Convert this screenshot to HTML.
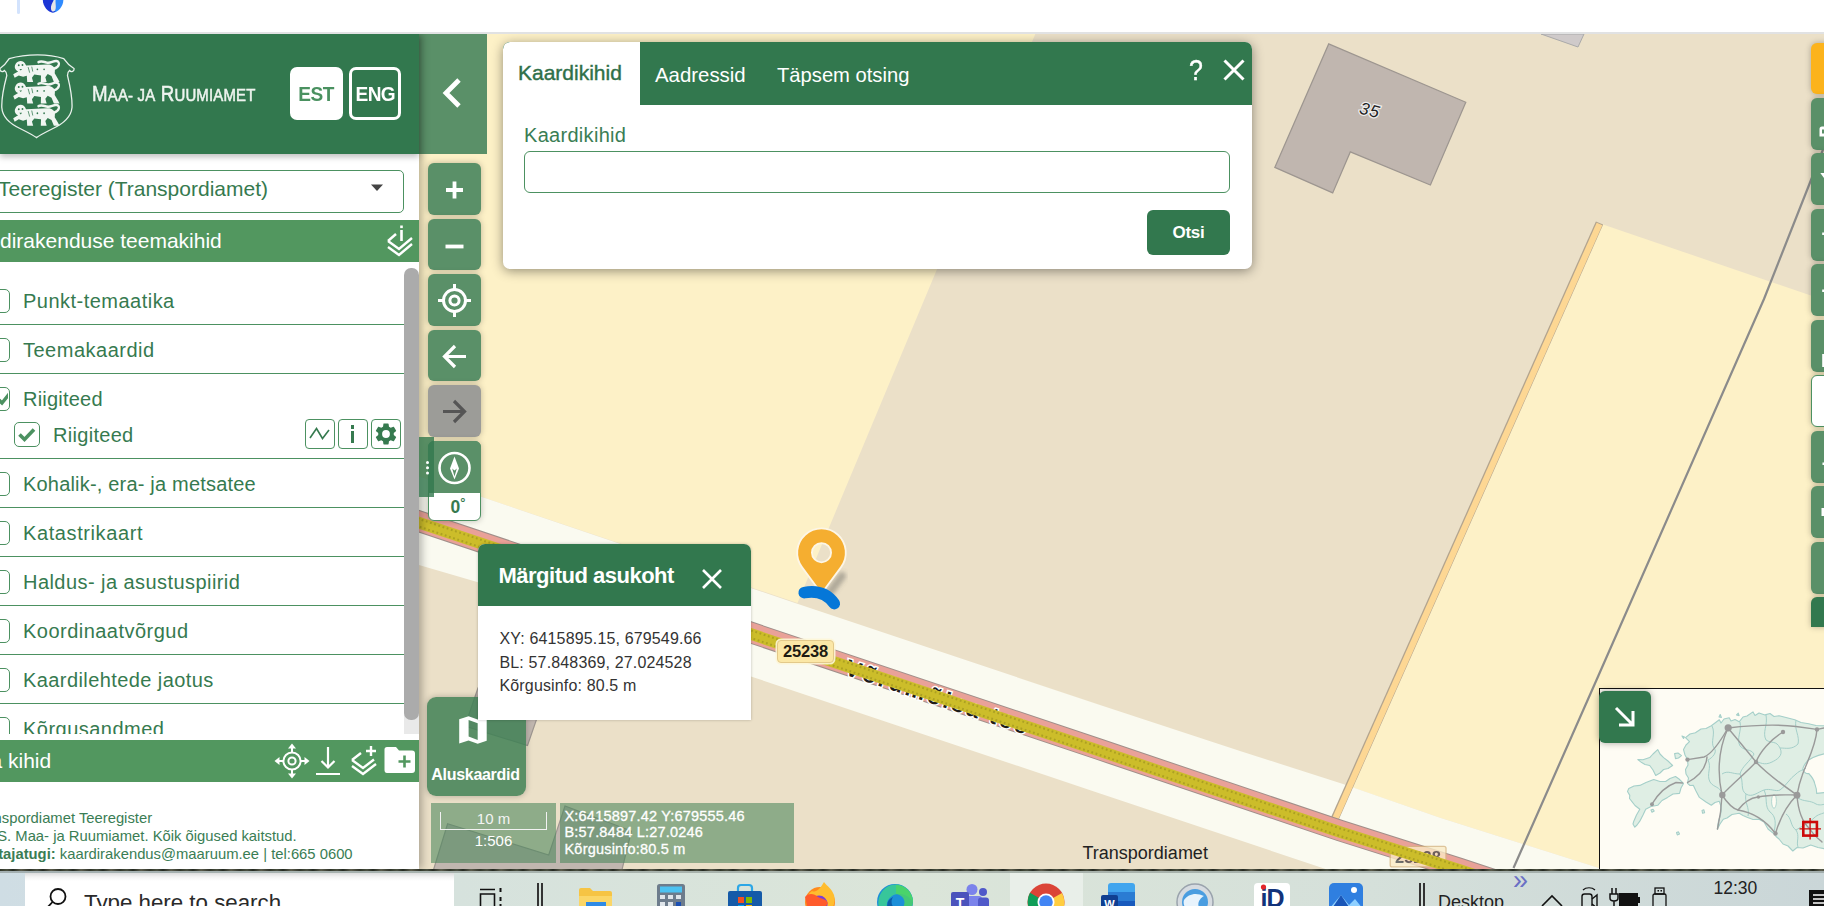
<!DOCTYPE html>
<html lang="et">
<head>
<meta charset="utf-8">
<title>Teeregister</title>
<style>
*{box-sizing:border-box}
html,body{margin:0;padding:0;width:1824px;height:906px;overflow:hidden;background:#fff;font-family:"Liberation Sans",sans-serif}
#root{position:relative;width:1824px;height:906px;overflow:hidden;background:#fff}
.abs{position:absolute}
#map{position:absolute;left:0;top:0;width:1824px;height:906px}
/* browser chrome top */
#chrome{position:absolute;left:0;top:0;width:1824px;height:34px;background:#fff;border-bottom:2px solid #e1e2e3;z-index:5}
/* sidebar */
#side{position:absolute;left:0;top:34px;width:419px;height:835px;background:#fff;box-shadow:3px 0 8px rgba(0,0,0,.28)}
#hdr{position:absolute;left:0;top:0;width:419px;height:120px;background:#32784e;box-shadow:0 3px 6px rgba(0,0,0,.25)}
#collapse{position:absolute;left:419px;top:34px;width:68px;height:120px;background:#5a9068}
.g{color:#367a4f}
.mbtn{position:absolute;left:428px;width:53px;height:52px;border-radius:6px;background:#5a9068;box-shadow:0 0 6px rgba(0,0,0,.25)}
.mbtn svg{position:absolute;left:0;top:0}
.rbtn{position:absolute;left:1811.3px;width:20px;height:52px;border-radius:6px;background:#5a9068;box-shadow:0 0 6px rgba(0,0,0,.28)}
.row{position:absolute;left:0;width:404px;border-bottom:1.3px solid #4c9161;height:49px}
.row .cb{position:absolute;left:-15px;top:13px;width:25px;height:24px;border:1.5px solid #4c9161;border-radius:5px;background:#fff}
.row .t{position:absolute;left:23px;top:13.5px;font-size:20px;color:#367a4f;white-space:nowrap;transform-origin:0 50%}
.bar{position:absolute;left:0;width:419px;height:42px;background:#52975f;color:#fff;font-size:21px}
</style>
</head>
<body>
<div id="root">

<!-- MAP -->
<svg id="map" viewBox="0 0 1824 906" width="1824" height="906">
  <defs>
  </defs>
  <rect x="0" y="0" width="1824" height="906" fill="#ebe0c8"/>
  <!-- left field -->
  <polygon points="419,34 1035.3,34 797.5,603 480.6,496.6 419,476.6" fill="#fdf1c7"/>
  <!-- right field -->
  <polygon points="1598.6,223 1824,300 1824,881 1640,881 1599,868 1440,817.8 1347,785.5" fill="#fdf1c7"/>
  <!-- road parcel (white) -->
  <polygon points="419,476.6 480.6,496.6 795,603 1100,705 1240,751 1343.8,784.2 1440,817.8 1599,868 1640,881 1361,881 1324,868.5 1100,793.5 751,676.5 478,582.2 419,565" fill="#fafaf0"/>
  <!-- orange track -->
  <line x1="1599.5" y1="223" x2="1334.9" y2="818.4" stroke="#b3a48e" stroke-width="8"/>
  <line x1="1599.5" y1="224" x2="1334.9" y2="819.4" stroke="#fdd793" stroke-width="6.2"/>
  <!-- grey line -->
  <polyline points="1824,147 1811,180 1764,299 1596.5,680 1513.5,868" fill="none" stroke="#8b8b8b" stroke-width="2.2" stroke-linejoin="round"/>
  <!-- buildings -->
  <polygon points="1328.7,43.9 1465.8,102.2 1430.4,185 1350.3,151.9 1332.7,192.9 1274.8,167.4" fill="#c0b6af" stroke="#9d9690" stroke-width="1.2"/>
  <polygon points="1541,34 1578,47 1584,34" fill="#cfcaca" stroke="#aaa" stroke-width="1"/>
  <polygon points="447.6,823.8 548.7,855 565,806 631.4,831 620,878 431,878" fill="#c0b6af" stroke="#9d9690" stroke-width="1.2"/>
  <polygon points="546,692 527.5,745.5 465,726 478,688" fill="#c0b6af" stroke="#9d9690" stroke-width="1.2"/>
  <text x="1370" y="116" font-family="Liberation Sans, sans-serif" font-style="italic" font-size="17" fill="#222" stroke="#eee" stroke-width="2.5" paint-order="stroke" text-anchor="middle" transform="rotate(14 1370 110)" letter-spacing="1">35</text>
  <!-- road -->
  <polyline points="380,507.9 419,521.2 751,632.6 1100,749.6 1340,830.6 1459.8,868.5 1520,888.5" fill="none" stroke="#a08f8a" stroke-width="21.6"/>
  <polyline points="380,507.9 419,521.2 751,632.6 1100,749.6 1340,830.6 1459.8,868.5 1520,888.5" fill="none" stroke="#e9a198" stroke-width="19.6"/>
  <text id="roadname" font-family="Liberation Sans, sans-serif" font-weight="bold" font-size="23" fill="#1c1c1c" stroke="#fff" stroke-width="3" paint-order="stroke" letter-spacing="2.700" transform="translate(843.800,674.200) rotate(18.400)">Võrumõisa tee</text>
  <g opacity=".78"><rect x="1390.2" y="846.3" width="55.8" height="20.6" rx="2" fill="#fbebc6" stroke="#d6b582" stroke-width="1.3"/><text x="1418" y="863" font-family="Liberation Sans, sans-serif" font-weight="bold" font-size="16.5" fill="#4a4a4a" text-anchor="middle">25238</text></g>
  <polyline points="380,509.4 419,522.7 751,634.1 1100,751.1 1340,832.1 1459.8,870.0 1520,890.0" fill="none" stroke="#ccbd2a" stroke-width="11.6"/>
  <polyline points="380,505.7 419,519.0 751,630.4 1100,747.4 1340,828.4 1459.8,866.3 1520,886.3" fill="none" stroke="#ada122" stroke-width="2.1" stroke-dasharray="1.8 2.6"/>
  <polyline points="380,513.3 419,526.6 751,638.0 1100,755.0 1340,836.0 1459.8,873.9 1520,893.9" fill="none" stroke="#ada122" stroke-width="2.1" stroke-dasharray="1.8 2.6" stroke-dashoffset="2"/>
</svg>

<!-- BROWSER CHROME -->
<div id="chrome">
  <div class="abs" style="left:17px;top:-3px;width:3px;height:16.700px;background:#d3e3fd;border-radius:1.500px"></div>
  <svg class="abs" style="left:40px;top:0" width="26" height="14" viewBox="0 0 26 14"><path d="M2.800 0 C3 6.500 8 12.600 13 12.600 L13 0 Z" fill="#1b36d6"/><path d="M23.400 0 C23.200 6.500 18 12.600 13 12.600 L13 0 Z" fill="#2f8bff"/><path d="M13 12.600 C11 12.600 10.500 11 10.500 11 L15.500 11 C15.500 11 15 12.600 13 12.600 Z" fill="#1b36d6"/><path d="M14 0 C12 3 10.600 6 11 9 C11.300 11 12.200 11.600 13.200 11.600 C14.600 11.600 15.800 10 15.800 7 C15.800 4 15.400 2 15.600 0 Z" fill="#e6e6e6"/></svg>
</div>


<!-- collapse button -->
<div id="collapse"><svg class="abs" style="left:21px;top:42.5px" width="24" height="32" viewBox="0 0 24 32"><path d="M19 3 L6 16 L19 29" fill="none" stroke="#fff" stroke-width="4.8"/></svg></div>

<!-- SIDEBAR -->
<div id="side">
  <div id="hdr">
    <svg class="abs" style="left:0;top:18px" width="80" height="90" viewBox="0 0 80 90">
      <path d="M9.2 6.6 C18 4 28 2.8 37.6 2.8 C47 2.8 56 4 63.7 6.6 C66 10 69 13.5 74 16.5 C74.5 19.5 71 20.5 69.5 18.5 C68 19.5 67.5 21.5 67.5 23.5 C70 34 72.5 44 72 55.5 C71 66 63 72 52 77 C46 80 40 83 36.4 85.6 C33 83 27 80 21 77 C10 72 2.5 66 1.8 55.5 C1.4 44 4 34 6.8 23.5 C6.8 21.5 6 19.5 4.5 18.5 C3 20.5 -0.5 19.5 0 16.5 C4.5 13.5 7 10 9.2 6.6 Z" fill="none" stroke="#e9f1ec" stroke-width="1.3"/>
      <g transform="translate(13.200,8.4) scale(1.030,1.120)"><path d="M12.5 4.5 L33 3.6 C37.5 3.4 40.5 5.5 40.5 9 L40.3 11.5 L43.5 16.5 L45 19.2 L39.5 19.2 L37.2 14 L33.5 12.2 L31.2 15 L32.5 19.2 L26.8 19.2 L27 13.4 L20.5 12.6 L18.2 15.4 L19.4 19.2 L13.6 19.2 L13.2 13.6 L9.6 14.6 L5.4 13.4 L1.4 15.6 L0 12.4 L4.8 9.8 C1.6 8.6 0.6 5.6 2.6 2.8 C4.8 -0.4 10.6 -0.6 12.5 4.5 Z" fill="#f1f6f2"/><path d="M39.5 7.5 C45 6 46 1.2 42 0.6 C38.5 0.2 36.5 3 32.5 2 C29.5 1.2 27 0.2 24.5 1.6" fill="none" stroke="#f1f6f2" stroke-width="2.2" stroke-linecap="round"/><g fill="#32784e"><circle cx="5.4" cy="4.4" r=".9"/><circle cx="9" cy="4.2" r=".9"/><path d="M6 7.6 L8.6 7.6 L7.3 9 Z"/><path d="M14.5 6 L16 11 M18 5.6 L19 10 M22.5 14 L24 18" stroke="#32784e" stroke-width=".7" fill="none"/><circle cx="23.5" cy="8" r=".8"/><circle cx="30" cy="8" r=".8"/></g></g>
      <g transform="translate(13.200,30.0) scale(1.030,1.120)"><path d="M12.5 4.5 L33 3.6 C37.5 3.4 40.5 5.5 40.5 9 L40.3 11.5 L43.5 16.5 L45 19.2 L39.5 19.2 L37.2 14 L33.5 12.2 L31.2 15 L32.5 19.2 L26.8 19.2 L27 13.4 L20.5 12.6 L18.2 15.4 L19.4 19.2 L13.6 19.2 L13.2 13.6 L9.6 14.6 L5.4 13.4 L1.4 15.6 L0 12.4 L4.8 9.8 C1.6 8.6 0.6 5.6 2.6 2.8 C4.8 -0.4 10.6 -0.6 12.5 4.5 Z" fill="#f1f6f2"/><path d="M39.5 7.5 C45 6 46 1.2 42 0.6 C38.5 0.2 36.5 3 32.5 2 C29.5 1.2 27 0.2 24.5 1.6" fill="none" stroke="#f1f6f2" stroke-width="2.2" stroke-linecap="round"/><g fill="#32784e"><circle cx="5.4" cy="4.4" r=".9"/><circle cx="9" cy="4.2" r=".9"/><path d="M6 7.6 L8.6 7.6 L7.3 9 Z"/><path d="M14.5 6 L16 11 M18 5.6 L19 10 M22.5 14 L24 18" stroke="#32784e" stroke-width=".7" fill="none"/><circle cx="23.5" cy="8" r=".8"/><circle cx="30" cy="8" r=".8"/></g></g>
      <g transform="translate(13.200,52.3) scale(1.030,1.120)"><path d="M12.5 4.5 L33 3.6 C37.5 3.4 40.5 5.5 40.5 9 L40.3 11.5 L43.5 16.5 L45 19.2 L39.5 19.2 L37.2 14 L33.5 12.2 L31.2 15 L32.5 19.2 L26.8 19.2 L27 13.4 L20.5 12.6 L18.2 15.4 L19.4 19.2 L13.6 19.2 L13.2 13.6 L9.6 14.6 L5.4 13.4 L1.4 15.6 L0 12.4 L4.8 9.8 C1.6 8.6 0.6 5.6 2.6 2.8 C4.8 -0.4 10.6 -0.6 12.5 4.5 Z" fill="#f1f6f2"/><path d="M39.5 7.5 C45 6 46 1.2 42 0.6 C38.5 0.2 36.5 3 32.5 2 C29.5 1.2 27 0.2 24.5 1.6" fill="none" stroke="#f1f6f2" stroke-width="2.2" stroke-linecap="round"/><g fill="#32784e"><circle cx="5.4" cy="4.4" r=".9"/><circle cx="9" cy="4.2" r=".9"/><path d="M6 7.6 L8.6 7.6 L7.3 9 Z"/><path d="M14.5 6 L16 11 M18 5.6 L19 10 M22.5 14 L24 18" stroke="#32784e" stroke-width=".7" fill="none"/><circle cx="23.5" cy="8" r=".8"/><circle cx="30" cy="8" r=".8"/></g></g>
    </svg>
    <div class="abs" id="brand" style="left:92px;top:47.5px;color:#eef4ef;white-space:nowrap;font-size:21.5px;line-height:24px;transform-origin:0 50%;transform:scaleX(.87);letter-spacing:.2px;-webkit-text-stroke:.55px #eef4ef">M<span style="font-size:17.2px">AA- JA</span> R<span style="font-size:17.2px">UUMIAMET</span></div>
    <div class="abs" style="left:290px;top:33px;width:53px;height:53px;border-radius:7px;background:#fff;color:#4a9160;font-weight:bold;font-size:20.5px;line-height:53px;text-align:center;letter-spacing:-.6px"><span id="est" style="display:inline-block;transform:scaleX(.93)">EST</span></div>
    <div class="abs" style="left:349px;top:33px;width:52px;height:53px;border-radius:7px;border:3px solid #fff;color:#fff;font-weight:bold;font-size:20.5px;line-height:47px;text-align:center;letter-spacing:-.6px"><span id="eng" style="display:inline-block;transform:scaleX(.93)">ENG</span></div>
  </div>

  <!-- select -->
  <div class="abs" style="left:-20px;top:136px;width:424px;height:43px;border:1.5px solid #4c9161;border-radius:5px;background:#fff"></div>
  <div class="abs g" id="seltxt" style="left:-2px;top:142.200px;font-size:21px;line-height:26px;white-space:nowrap;transform-origin:0 50%">Teeregister (Transpordiamet)</div>
  <svg class="abs" style="left:370px;top:150px" width="14" height="8" viewBox="0 0 14 8"><path d="M1 0.5 L13 0.5 L7 7 Z" fill="#444"/></svg>

  <!-- theme bar -->
  <div class="bar" style="top:186px"><span class="abs" id="bar1" style="left:0;top:8px;line-height:26px;white-space:nowrap;transform-origin:0 50%">dirakenduse teemakihid</span>
    <svg class="abs" style="left:385px;top:2px" width="30" height="36" viewBox="0 0 30 36"><path d="M3 19 L14 27 L27 16" fill="none" stroke="#fff" stroke-width="2.4"/><path d="M3 25 L14 33 L27 22" fill="none" stroke="#fff" stroke-width="2.4"/><path d="M3 19 L11 12" fill="none" stroke="#fff" stroke-width="2.4"/><rect x="15.2" y="8" width="2.6" height="11" fill="#fff"/><rect x="15.2" y="3.5" width="2.6" height="2.6" fill="#fff"/></svg>
  </div>

  <!-- list -->
  <div class="abs" style="left:0;top:228px;width:419px;height:471.5px;overflow:hidden">
    <div class="row" style="top:14px"><div class="cb"></div><div class="t" style="letter-spacing:0.48px">Punkt-temaatika</div></div>
    <div class="row" style="top:63px"><div class="cb"></div><div class="t" style="letter-spacing:0.5px">Teemakaardid</div></div>
    <div class="row" style="top:112px;height:85px"><div class="cb"><svg class="abs" style="left:0;top:0" width="22" height="21" viewBox="0 0 22 21"><path d="M13 12 L16 15 L24 5" fill="none" stroke="#4c9161" stroke-width="3.4"/></svg></div><div class="t" style="letter-spacing:.21px">Riigiteed</div>
      <div class="abs" style="left:14px;top:48px;width:26px;height:25px;border:1.5px solid #4c9161;border-radius:5px;background:#fff"><svg class="abs" style="left:0;top:0" width="23" height="22" viewBox="0 0 23 22"><path d="M4.5 11.5 L9.5 16.5 L19 6.5" fill="none" stroke="#4c9161" stroke-width="3.6"/></svg></div>
      <div class="t" style="left:53px;top:49.5px;letter-spacing:.3px">Riigiteed</div>
      <div class="abs" style="left:305px;top:45.400px;width:30px;height:30px;border:1.5px solid #4c9161;border-radius:4px"><svg class="abs" style="left:0;top:0" width="27" height="27" viewBox="0 0 27 27"><path d="M4 18 L10.5 8.5 L16.5 18.5 L23 10" fill="none" stroke="#367a4f" stroke-width="1.6"/></svg></div>
      <div class="abs" style="left:338px;top:45.400px;width:30px;height:30px;border:1.5px solid #4c9161;border-radius:4px"><div class="abs" style="left:11.5px;top:5px;width:3.6px;height:3.6px;background:#367a4f"></div><div class="abs" style="left:11.5px;top:10.5px;width:3.6px;height:12px;background:#367a4f"></div></div>
      <div class="abs" style="left:371px;top:45.400px;width:30px;height:30px;border:1.5px solid #4c9161;border-radius:4px"><svg class="abs" style="left:0.5px;top:0.5px" width="26" height="26" viewBox="0 0 24 24"><path fill="#367a4f" d="M19.14 12.94c.04-.3.06-.61.06-.94 0-.32-.02-.64-.07-.94l2.030-1.580a.49.49 0 0 0 .12-.61l-1.920-3.320a.49.49 0 0 0-.59-.22l-2.390.96c-.5-.38-1.030-.7-1.620-.94l-.36-2.540a.48.48 0 0 0-.48-.41h-3.840c-.24 0-.43.17-.47.41l-.36 2.540c-.59.24-1.130.57-1.620.94l-2.390-.96c-.22-.08-.47 0-.59.22L2.740 8.870c-.12.21-.08.47.12.61l2.030 1.580c-.05.3-.09.63-.09.94s.02.64.07.94l-2.030 1.580a.49.49 0 0 0-.12.61l1.920 3.320c.12.22.37.29.59.22l2.390-.96c.5.38 1.030.7 1.620.94l.36 2.540c.05.24.24.41.48.41h3.840c.24 0 .44-.17.47-.41l.36-2.540c.59-.24 1.130-.56 1.620-.94l2.390.96c.22.08.47 0 .59-.22l1.920-3.320c.12-.22.07-.47-.12-.61l-2.010-1.580zM12 15.600A3.600 3.600 0 1 1 12 8.400a3.600 3.600 0 0 1 0 7.200z"/></svg></div>
    </div>
    <div class="row" style="top:197px"><div class="cb"></div><div class="t" style="letter-spacing:0.19px">Kohalik-, era- ja metsatee</div></div>
    <div class="row" style="top:246px"><div class="cb"></div><div class="t" style="letter-spacing:0.6px">Katastrikaart</div></div>
    <div class="row" style="top:295px"><div class="cb"></div><div class="t" style="letter-spacing:0.44px">Haldus- ja asustuspiirid</div></div>
    <div class="row" style="top:344px"><div class="cb"></div><div class="t" style="letter-spacing:0.475px">Koordinaatvõrgud</div></div>
    <div class="row" style="top:393px"><div class="cb"></div><div class="t" style="letter-spacing:0.42px">Kaardilehtede jaotus</div></div>
    <div class="row" style="top:442px"><div class="cb"></div><div class="t" style="letter-spacing:0.475px">Kõrgusandmed</div></div>
    <!-- scrollbar -->
    <div class="abs" style="left:404px;top:440px;width:15px;height:38px;background:#e9e9e9"></div>
    <div class="abs" style="left:404px;top:6px;width:15px;height:452px;background:#ababab;border-radius:7px"></div>
  </div>

  <!-- layers bar -->
  <div class="bar" style="top:706px"><span class="abs" id="bar2" style="left:-9.5px;top:8px;line-height:26px;white-space:nowrap">a kihid</span>
    <svg class="abs" style="left:273px;top:2px" width="38" height="38" viewBox="0 0 38 38"><g fill="none" stroke="#fff" stroke-width="2"><circle cx="19" cy="19" r="8.6"/><circle cx="19" cy="19" r="3.6"/></g><g fill="#fff"><path d="M19 1.5 l4 5 h-8z M19 36.5 l4 -5 h-8z M1.5 19 l5 -4 v8z M36.5 19 l-5 -4 v8z"/><rect x="18" y="5" width="2" height="6"/><rect x="18" y="27" width="2" height="6"/><rect x="5" y="18" width="6" height="2"/><rect x="27" y="18" width="6" height="2"/></g></svg>
    <svg class="abs" style="left:314px;top:5px" width="28" height="32" viewBox="0 0 28 32"><g fill="none" stroke="#fff" stroke-width="2.2"><path d="M14 2 V22 M7.5 16 L14 22.5 L20.5 16 M2 29 H26"/></g></svg>
    <svg class="abs" style="left:349px;top:3px" width="32" height="36" viewBox="0 0 32 36"><g fill="none" stroke="#fff" stroke-width="2.4"><path d="M3 17 L14 25 L25 16.5 M3 23 L14 31 L27 21 M3 17 L12 10"/><path d="M22 3 V13 M17 8 H27"/></g></svg>
    <svg class="abs" style="left:384px;top:6px" width="32" height="28" viewBox="0 0 32 28"><path d="M3 1 H12 L15 4.5 H28 Q31 4.5 31 7.5 V24 Q31 27 28 27 H3 Q0.5 27 0.5 24 V3.5 Q0.5 1 3 1 Z" fill="#fff"/><path d="M20.5 9.5 V21.5 M14.5 15.5 H26.5" stroke="#52975f" stroke-width="2.6" fill="none"/></svg>
  </div>

  <!-- footer -->
  <div class="abs g" id="foot" style="left:0;top:776px;font-size:14.8px;line-height:17.9px;white-space:nowrap;color:#3a7d54">
    <div><span id="f1" style="position:relative;left:-6.4px">nspordiamet Teeregister</span></div>
    <div><span id="f2" style="position:relative;left:-17.8px">&#169; S. Maa- ja Ruumiamet. Kõik õigused kaitstud.</span></div>
    <div><span id="f3" style="position:relative;left:-10.9px"><b id="f3b">utajatugi:</b> kaardirakendus@maaruum.ee | tel:665 0600</span></div>
  </div>
</div>

<!-- LEFT MAP TOOLBAR -->
<div class="mbtn" style="top:163px"><svg width="53" height="52" viewBox="0 0 53 52"><path d="M26.500 18.500 V35.500 M18 27 H35" stroke="#fff" stroke-width="3.800" fill="none"/></svg></div>
<div class="mbtn" style="top:219px;height:51px"><svg width="53" height="52" viewBox="0 0 53 52"><path d="M17.500 27.500 H35.500" stroke="#fff" stroke-width="3.8" fill="none"/></svg></div>
<div class="mbtn" style="top:274px"><svg width="53" height="52" viewBox="0 0 53 52"><g fill="none" stroke="#fff"><circle cx="26.500" cy="26.500" r="11" stroke-width="3"/><circle cx="26.500" cy="26.500" r="4.600" stroke-width="3"/><path d="M26.500 10 V16 M26.500 37 V43 M10 26.500 H16 M37 26.500 H43" stroke-width="3"/></g></svg></div>
<div class="mbtn" style="top:330px;height:51px"><svg width="53" height="52" viewBox="0 0 53 52"><path d="M38 26.500 H17 M27 16 L16.500 26.500 L27 37" stroke="#fff" stroke-width="3.200" fill="none"/></svg></div>
<div class="mbtn" style="top:385px;background:#9c9c98"><svg width="53" height="52" viewBox="0 0 53 52"><path d="M15 26.500 H36 M26 16 L36.500 26.500 L26 37" stroke="#555" stroke-width="3.200" fill="none"/></svg></div>
<!-- compass + handle -->
<div class="abs" style="left:428px;top:441px;width:53px;height:80px;border-radius:6px;background:#fff;border:1.300px solid #4c9161;box-shadow:0 0 6px rgba(0,0,0,.25)"></div>
<div class="mbtn" style="top:441px;border-radius:6px 6px 0 0;box-shadow:none"><svg width="53" height="52" viewBox="0 0 53 52"><circle cx="26.500" cy="27" r="15" fill="none" stroke="#fff" stroke-width="2.600"/><path d="M26.500 15.500 L31 27.500 L26.500 38.500 L22 27.500 Z" fill="#fff"/><path d="M26.500 29.500 L28.800 27.500 L26.500 35.500 L24.200 27.500 Z" fill="#5a9068"/></svg></div>
<div class="abs g" style="left:428px;top:496px;width:53px;text-align:center;font-weight:bold;font-size:17.500px;line-height:22px;padding-left:7px">0<span style="font-size:13px;position:relative;top:-6px">°</span></div>
<div class="abs" style="left:419px;top:437px;width:15px;height:60px;background:rgba(50,120,78,.8)"></div>
<div class="abs" style="left:426px;top:461px;width:3.2px;height:3.2px;background:#fff;border-radius:2px;box-shadow:0 5.2px 0 #fff,0 10.400px 0 #fff"></div>

<!-- Aluskaardid -->
<div class="abs" style="left:427px;top:697px;width:99px;height:99px;border-radius:9px;background:rgba(62,128,84,.84);box-shadow:0 0 6px rgba(0,0,0,.25)">
  <svg class="abs" style="left:30px;top:17px" width="32" height="32" viewBox="0 0 32 32"><path fill-rule="evenodd" d="M2.200 5.200 L11.500 2.200 L20.700 5.400 L29.700 2.400 V26.700 L20.700 29.700 L11.500 26.500 L2.200 29.500 Z M11.600 5.900 L20.700 9.200 V26 L11.600 22.400 Z" fill="#fff"/></svg>
  <div class="abs" id="alus" style="left:-1px;top:67.500px;width:99px;text-align:center;color:#fff;font-weight:bold;font-size:16px;line-height:20px;letter-spacing:-.3px">Aluskaardid</div>
</div>

<!-- scale + coords -->
<div class="abs" style="left:431px;top:803px;width:125px;height:59.6px;background:rgba(74,134,92,.58)">
  <div class="abs" style="left:9px;top:9px;width:107px;height:18px;border:1.300px solid #f2f2f2;border-top:none"></div>
  <div class="abs" style="left:0;top:6px;width:125px;text-align:center;color:#f4f4f4;font-size:15px;line-height:20px">10 m</div>
  <div class="abs" style="left:0;top:28px;width:125px;text-align:center;color:#fff;font-size:15px;line-height:20px">1:506</div>
</div>
<div class="abs" id="coords" style="left:560px;top:803px;width:234px;height:59.6px;background:rgba(74,134,92,.58);color:#fff;font-size:14.500px;line-height:16.700px;padding:4.500px 0 0 4.500px;letter-spacing:.2px;white-space:nowrap;-webkit-text-stroke:.3px #fff">
  <div>X:6415897.42 Y:679555.46</div><div>B:57.8484 L:27.0246</div><div>Kõrgusinfo:80.5 m</div>
</div>

<div class="abs" id="attr" style="left:1082.500px;top:841.500px;font-size:18px;line-height:22px;color:#222;white-space:nowrap">Transpordiamet</div>

<!-- RIGHT TOOLBAR -->
<div class="rbtn" style="top:42.5px;height:51px;background:#fcb31c"></div>
<div class="rbtn" style="top:97.8px"></div>
<div class="rbtn" style="top:153.3px"></div>
<div class="rbtn" style="top:208.8px"></div>
<div class="rbtn" style="top:264.3px"></div>
<div class="rbtn" style="top:319.8px"></div>
<div class="rbtn" style="top:375.3px;background:#fff;border:1.3px solid #4c9161"></div>
<div class="rbtn" style="top:430.8px"></div>
<div class="rbtn" style="top:486.3px"></div>
<div class="rbtn" style="top:541.8px"></div>
<div class="rbtn" style="top:597.3px;height:30px;background:#32784e;border-radius:6px 0 0 0"></div>
<svg class="abs" style="left:1811px;top:98px" width="13" height="500" viewBox="0 0 13 500"><g fill="#fff"><path d="M13 28.500 H11 Q8.500 28.500 8.500 31 V38.500 H13 V35.500 H11 V31.500 H13 Z"/><path d="M9.300 75 H13 V80 Z"/><rect x="11.200" y="134.500" width="1.800" height="2.500"/><rect x="11.200" y="191.500" width="1.800" height="2.500"/><rect x="11.200" y="256" width="1.800" height="13"/><rect x="11.500" y="364.500" width="1.500" height="2.500"/><rect x="10.500" y="410" width="2.500" height="8"/></g></svg>

<!-- SEARCH PANEL -->
<div class="abs" style="left:503px;top:42px;width:749px;height:227px;background:#fff;border-radius:7px;box-shadow:0 2px 12px rgba(0,0,0,.42);overflow:hidden">
  <div class="abs" style="left:0;top:0;width:749px;height:63px;background:#32784e"></div>
  <div class="abs" style="left:0;top:0;width:137px;height:63px;background:#fff;border-radius:7px 0 0 0"></div>
  <div class="abs" id="tab1" style="left:15px;top:18px;font-size:21px;line-height:26px;color:#2f7049;white-space:nowrap;-webkit-text-stroke:.4px #2f7049">Kaardikihid</div>
  <div class="abs" id="tab2" style="left:152px;top:20px;font-size:20.400px;line-height:26px;color:#fff;white-space:nowrap">Aadressid</div>
  <div class="abs" id="tab3" style="left:274px;top:20px;font-size:20.200px;line-height:26px;color:#fff;white-space:nowrap">Täpsem otsing</div>
  <div class="abs" id="qm" style="left:686px;top:12px;font-size:29px;line-height:32px;color:#fff;transform:scaleX(.86);transform-origin:0 50%;-webkit-text-stroke:.4px #fff">?</div>
  <svg class="abs" style="left:720px;top:17px" width="22" height="22" viewBox="0 0 22 22"><path d="M1.500 1.500 L20.500 20.500 M20.500 1.500 L1.500 20.500" stroke="#fff" stroke-width="3" fill="none"/></svg>
  <div class="abs g" id="lbl" style="left:21px;top:80.500px;font-size:20px;line-height:24px;white-space:nowrap;color:#3a7d54;letter-spacing:.3px">Kaardikihid</div>
  <div class="abs" style="left:21px;top:109px;width:706px;height:42px;border:1.300px solid #4c9161;border-radius:6px;background:#fff"></div>
  <div class="abs" style="left:644px;top:168px;width:83px;height:45px;border-radius:6px;background:#32784e;color:#fff;font-weight:bold;font-size:17px;line-height:45px;text-align:center;letter-spacing:-.3px">Otsi</div>
</div>

<!-- road shield labels -->
<div class="abs" style="left:777px;top:640px;width:57px;height:23px;background:#fbe7a6;border:1.300px solid #e3c98a;border-radius:4px;box-shadow:0 0 0 1.500px rgba(253,246,215,.9);color:#1d1a12;font-weight:bold;font-size:16.500px;line-height:21px;text-align:center;letter-spacing:-.2px">25238</div>

<!-- MARKER -->
<svg class="abs" style="left:786px;top:520px" width="80" height="96" viewBox="0 0 80 96">
  <defs><filter id="blur1" x="-50%" y="-50%" width="200%" height="200%"><feGaussianBlur stdDeviation="2.200"/></filter></defs>
  <path d="M44 72 L56 56" fill="none" stroke="rgba(95,95,90,.42)" stroke-width="8" stroke-linecap="round" filter="url(#blur1)"/>
  <path fill-rule="evenodd" d="M16.100 47.350 A24.300 24.300 0 1 1 54.900 47.350 L35.500 73.500 Z M35.500 23.100 A9.600 9.600 0 1 0 35.500 42.300 A9.600 9.600 0 1 0 35.500 23.100 Z" fill="#f5ae30" stroke="#fdf6e6" stroke-width="1.800" stroke-linejoin="round"/>
  <path d="M18.200 72.600 Q38 69 48.300 83.600" fill="none" stroke="#0577d8" stroke-width="11.600" stroke-linecap="round"/>
</svg>

<!-- POPUP -->
<div class="abs" style="left:477.500px;top:544px;width:273px;height:175.500px;background:#fff;border-radius:7px 7px 0 0;box-shadow:0 0 3px rgba(0,0,0,.25);overflow:hidden">
  <div class="abs" style="left:0;top:0;width:273px;height:62px;background:#32784e"></div>
  <div class="abs" id="ptitle" style="left:21px;top:18px;font-size:22px;line-height:28px;font-weight:bold;color:#fff;white-space:nowrap;letter-spacing:-.5px">Märgitud asukoht</div>
  <svg class="abs" style="left:223px;top:24px" width="22" height="22" viewBox="0 0 22 22"><path d="M2 2 L20 20 M20 2 L2 20" stroke="#fff" stroke-width="2.600" fill="none"/></svg>
  <div class="abs" id="pbody" style="left:22px;top:83px;font-size:16px;line-height:23.500px;color:#333;white-space:nowrap;letter-spacing:.15px">
    <div>XY: 6415895.15, 679549.66</div><div>BL: 57.848369, 27.024528</div><div>Kõrgusinfo: 80.5 m</div>
  </div>
</div>

<!-- OVERVIEW MAP -->
<div class="abs" style="left:1599px;top:688px;width:230px;height:182px;background:#fefcf4;border:1.500px solid #111">
  <svg class="abs" style="left:0;top:1px" width="226" height="180" viewBox="0 0 226 180">
    <g fill="#dfeee4" stroke="#a5cfc9" stroke-width="1.100" stroke-linejoin="round">
      <path d="M85.500 47.700 L90 44 L95.400 42.700 L101 39 L106 38.500 L111.300 35.800 L115 33 L119.300 29.800 L121 33 L124 29 L129.200 27.800 L131 31 L135 29.500 L139.200 31.800 L143 27 L147 26 L153 21.900 L155 25.500 L159 23 L165 24.900 L170 23.500 L174 26.500 L179 25.800 L186 27.500 L194.800 29.800 L201 32.500 L208.700 33.800 L216 35.500 L226 35.800 L226 63.600 C216 65 208 70 206.800 71.600 C204 75 202.800 77 202.800 79.500 C204 83 207 84 208.700 83.500 C212 87 214 90 214.700 93.400 C216 97 216.700 100 216.700 103.400 L226 102.400 L226 159 L218 157.500 L210.700 155 L203 158 L197 157.500 L192.800 161 L188 156 L183 154 L179 149 L176 146.500 L173 143 L168 139 L164 132 L159 129.200 L153 129.500 L147 127.200 L143 125.500 L139.200 123.300 L132 124.500 L127 128 L123.300 129.200 L120 134 L117.300 139.200 L118.500 131 L120.500 125 L121.300 119.300 L120.500 115 L119.300 111.300 L115 112.500 L111.300 115.300 L106 112 L99.400 107.400 L96 101 L93.400 95.400 L90 95.500 L87.500 93.400 L88.500 88 L86 84 L85.500 79.500 L88 75 L87.500 69.600 L85 65 L83.500 59.600 L86 55 L89.500 51.700 Z"/>
      <path d="M37.800 69.600 L43 69.800 L49.700 67.600 L53 64 L57.700 59.600 L60 64 L63.600 67.600 L68 71 L72.600 75.500 L68 78.500 L63.600 79.500 L60 83 L55.700 85.500 L53 80 L49.700 75.500 L45 74.500 L41.700 72.600 Z"/>
      <path d="M74.600 63.600 L78 63 L81.500 65.600 L78.500 68 L75.500 68.600 Z"/>
      <path d="M28.800 98.400 L34 96 L39.800 95.400 L46 92.500 L53.700 89.500 L60 91.500 L65.600 91.500 L70 88.500 L75.500 86.500 L79 89 L83.500 93.400 L81 98 L79.500 103.400 L73 104 L67.600 107.400 L62 110.500 L57.700 115.300 L51 116.500 L45.700 119.300 L43 125 L39.800 131.200 L37 135 L34.800 137.200 L33 134 L33.800 131.200 L36.500 125 L39.800 119.300 L35 115.500 L31.800 111.300 L29.500 108.500 L29.800 105.400 L27.500 101.500 Z"/>
      <path d="M51 120 l2 -0.800 l1.200 1.800 l-2.200 1.200 z M102 120.500 l1.800 -0.800 l0.800 3 l-2 0.600 z M76.500 142.500 l2 -0.600 l1 2.200 l-2.200 0.800 z M82 46 l2.500 1 l-1 1.500 z M119 27 l1.200 -2.500 l1.200 3 z M136.500 25 l1.800 -1.800 l0.800 2.400 z"/>
    </g>
    <ellipse cx="174" cy="111.300" rx="2.400" ry="7" fill="#fefcf3" stroke="#a5cfc9" stroke-width=".8"/>
    <g fill="none" stroke="#a5cfc9" stroke-width="1">
      <path d="M112 36 C116 44 110 52 114 58 C118 62 112 68 108 70 M108 70 C112 78 106 84 110 92 C114 98 120 96 122 104"/>
      <path d="M140 32 C142 42 136 48 140 56 C146 62 150 58 154 64 M154 64 C150 72 142 76 140 84 C132 84 128 80 122 84"/>
      <path d="M166 25 C168 36 162 42 166 50 C172 54 176 50 180 58 C184 66 176 70 172 72 C164 76 160 72 156 72"/>
      <path d="M196 30 C194 40 200 46 198 54 C192 60 186 58 180 58"/>
      <path d="M140 84 C144 92 140 100 146 104 C152 108 158 102 164 100 C170 98 176 102 180 100 C186 96 190 88 196 84 C200 80 204 80 206 78"/>
      <path d="M146 104 C144 112 150 118 148 126 M164 100 C168 108 164 116 170 122 C176 126 176 134 174 142"/>
      <path d="M186 124 C192 128 190 136 196 140 C200 146 196 152 198 157 M196 140 C202 136 208 134 214 128 C218 124 222 124 226 122"/>
      <path d="M198 108 C204 112 210 110 216 114 C220 116 224 114 226 114"/>
    </g>
    <g fill="none" stroke="#9a9a9a" stroke-width="1.400" stroke-linecap="round">
      <path d="M128 38 C150 35.500 176 34 196 36.500 L217 39.400 L226 37.500"/>
      <path d="M128 38 C138 50 148 62 156 72 C168 85 184 96 197 105"/>
      <path d="M183 42 C170 50 160 62 156 72 C146 83 134 92 122 105"/>
      <path d="M128 38 C120 56 116.500 80 122 105"/>
      <path d="M122 105 C121.500 118 120 128 117.500 139"/>
      <path d="M128 38 C120 52 112 64 104 67 L87.500 69.600"/>
      <path d="M107 67 C106 78 100 86 87.500 92.500"/>
      <path d="M52 114 C58 104 66 96 76 92.500 L82.500 93"/>
      <path d="M217 39.400 C216 56 206 74 202 86 C199 94 198 100 197 105"/>
      <path d="M122 105 C128 114 134 119 138 120 C144 112 150 108 158 107 C172 104 186 105 197 105"/>
      <path d="M138 120 C150 122 164 128 175.500 143.500"/>
      <path d="M197 105 C186 116 180 128 175.500 143.500"/>
      <path d="M197 105 C198 120 202 132 210 139 C214 146 220 150 222 152"/>
    </g>
    <g fill="#9a9a9a"><circle cx="128.200" cy="37.800" r="3.600"/><circle cx="197" cy="105.200" r="3.400"/><circle cx="122.300" cy="105" r="3.200"/><circle cx="156" cy="72" r="2.200"/><circle cx="183" cy="42" r="2.200"/><circle cx="217" cy="39.400" r="2.200"/><circle cx="87.500" cy="69.600" r="2.200"/><circle cx="52" cy="114.300" r="2"/><circle cx="175.500" cy="143.500" r="2.200"/><circle cx="158.400" cy="107" r="1.800"/></g>
    <g fill="none" stroke="#cc0a0a"><rect x="203.300" y="132" width="13.600" height="13.600" stroke-width="2.600"/><path d="M210.100 128 V149.500 M199.500 138.800 H221" stroke-width="1.300"/></g>
  </svg>
  <div class="abs" style="left:-1px;top:2px;width:52px;height:52px;border-radius:6px;background:#32784e;box-shadow:0 0 7px rgba(0,0,0,.35)"><svg width="52" height="52" viewBox="0 0 52 52"><path d="M17 17 L33 33 M20 34 H34 V20" fill="none" stroke="#fff" stroke-width="3"/></svg></div>
</div>

<!-- TASKBAR -->
<div class="abs" style="left:0;top:868.500px;width:1824px;height:38px;background:linear-gradient(90deg,#cfdde4 0,#d6e2dd 25%,#dbe5d9 50%,#d5e0da 75%,#cad6d8 100%);overflow:hidden">
  <div class="abs" style="left:0;top:0;width:1824px;height:2.400px;background:repeating-linear-gradient(90deg,#2f3528 0,#4a4f40 7px,#232820 13px,#5b5c4c 21px,#30342a 30px)"></div>
  <div class="abs" style="left:0;top:2.400px;width:1824px;height:1.800px;background:rgba(120,130,125,.5)"></div>
  <!-- search box -->
  <div class="abs" style="left:25px;top:4.200px;width:429px;height:40px;background:linear-gradient(#dcdcdc 0,#f4f4f4 4px,#fff 8px)"></div>
  <svg class="abs" style="left:42.800px;top:17.700px" width="26" height="26" viewBox="0 0 26 26"><circle cx="15" cy="10.500" r="7.500" fill="none" stroke="#111" stroke-width="1.800"/><path d="M9.500 16 L2 24" stroke="#111" stroke-width="1.800"/></svg>
  <div class="abs" id="tsearch" style="left:84px;top:21.200px;font-size:22.300px;line-height:26px;color:#2a2a2a;white-space:nowrap">Type here to search</div>
  <!-- task view -->
  <svg class="abs" style="left:478px;top:18px" width="30" height="22" viewBox="0 0 30 22"><g fill="none" stroke="#111" stroke-width="1.600"><path d="M2 2.500 H17 M2.500 7 H16.500 V22 H2.500 Z"/><path d="M22.500 1 V5 M22.500 10 V14 M22.500 17 V22" stroke-width="2"/></g></svg>
  <div class="abs" style="left:537px;top:14px;width:1.500px;height:30px;background:#333"></div>
  <div class="abs" style="left:541px;top:14px;width:1.500px;height:30px;background:#333"></div>
  <!-- file explorer -->
  <svg class="abs" style="left:578px;top:18.500px" width="36" height="22" viewBox="0 0 36 22"><path d="M1 3 Q1 1 3 1 H12 L15 4 H32 Q34 4 34 6 V22 H1 Z" fill="#f6c444"/><path d="M1 9 H34 V22 H1 Z" fill="#fbd667"/><rect x="8" y="15" width="20" height="7" fill="#2f8be6"/></svg>
  <!-- calculator -->
  <svg class="abs" style="left:656px;top:14px" width="30" height="26" viewBox="0 0 30 26"><rect x="1" y="1" width="28" height="26" rx="2.500" fill="#6d7c8c"/><rect x="4" y="3.500" width="22" height="6" fill="#4cc2f1"/><g fill="#dfe5ea"><rect x="4" y="12" width="5" height="4"/><rect x="12" y="12" width="5" height="4"/><rect x="20" y="12" width="5" height="4"/><rect x="4" y="19" width="5" height="4"/><rect x="12" y="19" width="5" height="4"/></g><rect x="20" y="19" width="5" height="7" fill="#1b4fb3"/></svg>
  <!-- store -->
  <svg class="abs" style="left:727px;top:14px" width="36" height="30" viewBox="0 0 36 30"><path d="M11 9 V5 Q11 2 14 2 H22 Q25 2 25 5 V9" fill="none" stroke="#2da7e6" stroke-width="2.200"/><rect x="1" y="8" width="34" height="24" rx="2" fill="#155aa8"/><rect x="11" y="14" width="6" height="6" fill="#f25022"/><rect x="19" y="14" width="6" height="6" fill="#7fba00"/><rect x="11" y="22" width="6" height="6" fill="#00a4ef"/><rect x="19" y="22" width="6" height="6" fill="#ffb900"/></svg>
  <!-- firefox -->
  <svg class="abs" style="left:802px;top:12px" width="36" height="28" viewBox="0 0 36 28"><circle cx="18" cy="21" r="15" fill="#ff8a1d"/><path d="M22 1 C25 5 30 8 32 14 C34 22 30 28 30 28 H8 C4 22 4 14 10 10 C14 12 18 8 22 1 Z" fill="#ffbd2e"/><circle cx="17" cy="23" r="8.500" fill="#7c3fd6"/><path d="M3 16 C6 12 12 12 16 16 C20 18 24 18 26 22 L22 28 H6 Z" fill="#ff5b2b"/></svg>
  <!-- edge -->
  <svg class="abs" style="left:876px;top:13px" width="38" height="27" viewBox="0 0 38 27"><circle cx="19" cy="20" r="18" fill="#1c8fd8"/><path d="M3 16 C6 5 16 1 24 3 C32 5 37 12 37 20 C32 12 22 10 16 14 C10 18 10 24 12 27 H4 C2 24 2 20 3 16 Z" fill="#38c69a"/><path d="M20 3 C30 3 37 12 37 20 C37 24 34 27 34 27 H26 C30 22 30 14 20 12 Z" fill="#4fd65f" opacity=".8"/><path d="M12 27 C10 22 12 17 17 15 C14 20 16 25 20 27 Z" fill="#0c5ea8"/></svg>
  <!-- teams -->
  <svg class="abs" style="left:950px;top:14px" width="40" height="26" viewBox="0 0 40 26"><circle cx="22" cy="6.500" r="5.500" fill="#7b83eb"/><circle cx="33" cy="9" r="4" fill="#5059c9"/><rect x="14" y="13" width="18" height="15" rx="3" fill="#7b83eb"/><rect x="28" y="14.500" width="11" height="13" rx="3" fill="#5059c9"/><rect x="1" y="9" width="18" height="19" rx="2" fill="#4b53bc"/><text x="10" y="25" font-family="Liberation Sans, sans-serif" font-weight="bold" font-size="14" fill="#fff" text-anchor="middle">T</text></svg>
  <!-- chrome (active) -->
  <div class="abs" style="left:1010px;top:4px;width:73px;height:40px;background:rgba(255,255,255,.42)"></div>
  <svg class="abs" style="left:1027px;top:13px" width="38" height="27" viewBox="0 0 38 27"><circle cx="19" cy="20" r="18.500" fill="#db4437"/><path d="M19 20 L3.500 29 A18.500 18.500 0 0 1 3 10.800 Z" fill="#0f9d58"/><path d="M3 10.800 L12 26 L3.500 29 Z" fill="#0f9d58"/><path d="M19 20 L35 11 A18.500 18.500 0 0 1 30 35 Z" fill="#ffcd40"/><circle cx="19" cy="20" r="8.500" fill="#fff"/><circle cx="19" cy="20" r="6.800" fill="#4285f4"/></svg>
  <!-- word -->
  <svg class="abs" style="left:1100px;top:13px" width="36" height="27" viewBox="0 0 36 27"><rect x="8" y="1" width="27" height="30" rx="3" fill="#41a5ee"/><rect x="8" y="10" width="27" height="9" fill="#2b7cd3"/><rect x="8" y="19" width="27" height="10" fill="#185abd"/><rect x="1" y="13" width="17" height="16" rx="2" fill="#103f91"/><text x="9.500" y="26" font-family="Liberation Sans, sans-serif" font-weight="bold" font-size="11" fill="#fff" text-anchor="middle">W</text></svg>
  <!-- globe app -->
  <svg class="abs" style="left:1176px;top:13px" width="38" height="27" viewBox="0 0 38 27"><circle cx="19" cy="20" r="18" fill="#d6dbe0" stroke="#9aa3ad" stroke-width="1.500"/><circle cx="19" cy="20" r="13" fill="#4a9de0"/><path d="M8 18 C12 12 20 10 28 14 C24 16 20 22 24 27 H10 C8 24 7 21 8 18 Z" fill="#e8f3fc"/></svg>
  <!-- iD -->
  <svg class="abs" style="left:1254px;top:14px" width="36" height="26" viewBox="0 0 36 26"><rect x="0" y="0" width="36" height="30" rx="4" fill="#fff"/><text x="18" y="24" font-family="Liberation Sans, sans-serif" font-weight="bold" font-size="25" fill="#12337a" text-anchor="middle" letter-spacing="-1">iD</text><circle cx="9.500" cy="4" r="2.600" fill="#e3262b"/></svg>
  <!-- photos -->
  <svg class="abs" style="left:1329px;top:14px" width="34" height="26" viewBox="0 0 34 26"><rect x="0" y="0" width="34" height="30" rx="5" fill="#2f7fe0"/><path d="M0 26 L12 12 L20 22 L26 16 L34 26 V30 H0 Z" fill="#8fd0ff"/><path d="M0 30 L12 12 L24 30 Z" fill="#1956b8"/><circle cx="25" cy="7" r="3" fill="#fff"/></svg>
  <div class="abs" style="left:1419px;top:14px;width:1.500px;height:30px;background:#333"></div>
  <div class="abs" style="left:1423px;top:14px;width:1.500px;height:30px;background:#333"></div>
  <div class="abs" id="desk" style="left:1438px;top:20px;font-size:18px;line-height:26px;color:#222;white-space:nowrap">Desktop</div>
  <div class="abs" style="left:1513px;top:-3px;font-size:27px;line-height:28px;color:#6a6fc4;letter-spacing:-2px">»</div>
  <svg class="abs" style="left:1540px;top:24px" width="24" height="14" viewBox="0 0 24 14"><path d="M2 13 L12 3 L22 13" fill="none" stroke="#111" stroke-width="1.600"/></svg>
  <svg class="abs" style="left:1578px;top:17px" width="24" height="22" viewBox="0 0 24 22"><path d="M5 4 C8 1 14 1 17 4" fill="none" stroke="#111" stroke-width="1.200"/><rect x="4" y="8" width="10" height="14" rx="2.500" fill="none" stroke="#111" stroke-width="1.400"/><path d="M14 13 L19 9 V22 L14 18" fill="none" stroke="#111" stroke-width="1.400"/></svg>
  <svg class="abs" style="left:1608px;top:19px" width="32" height="20" viewBox="0 0 32 20"><path d="M4 0 V6 M8 0 V6 M2 6 H10 V10 Q10 13 6 13 Q2 13 2 10 Z M6 13 V20" fill="none" stroke="#111" stroke-width="1.500"/><rect x="11" y="5" width="19" height="15" fill="#111"/><rect x="30" y="9" width="2" height="6" fill="#111"/></svg>
  <svg class="abs" style="left:1650px;top:18px" width="18" height="22" viewBox="0 0 18 22"><rect x="5" y="1" width="9" height="6" fill="none" stroke="#111" stroke-width="1.300"/><rect x="7.500" y="3" width="1.500" height="1.500" fill="#111"/><rect x="10.500" y="3" width="1.500" height="1.500" fill="#111"/><rect x="3" y="7" width="13" height="16" rx="1.500" fill="none" stroke="#111" stroke-width="1.300"/></svg>
  <div class="abs" id="clock" style="left:1713.500px;top:7px;font-size:17.500px;line-height:24px;color:#222;white-space:nowrap">12:30</div>
  <svg class="abs" style="left:1808px;top:21px" width="16" height="17" viewBox="0 0 16 17"><rect x="1" y="0" width="18" height="17" fill="#111"/><path d="M5 5 H16 M5 9 H16 M5 13 H16" stroke="#fff" stroke-width="1.400"/></svg>
</div>

</div>
</body>
</html>
